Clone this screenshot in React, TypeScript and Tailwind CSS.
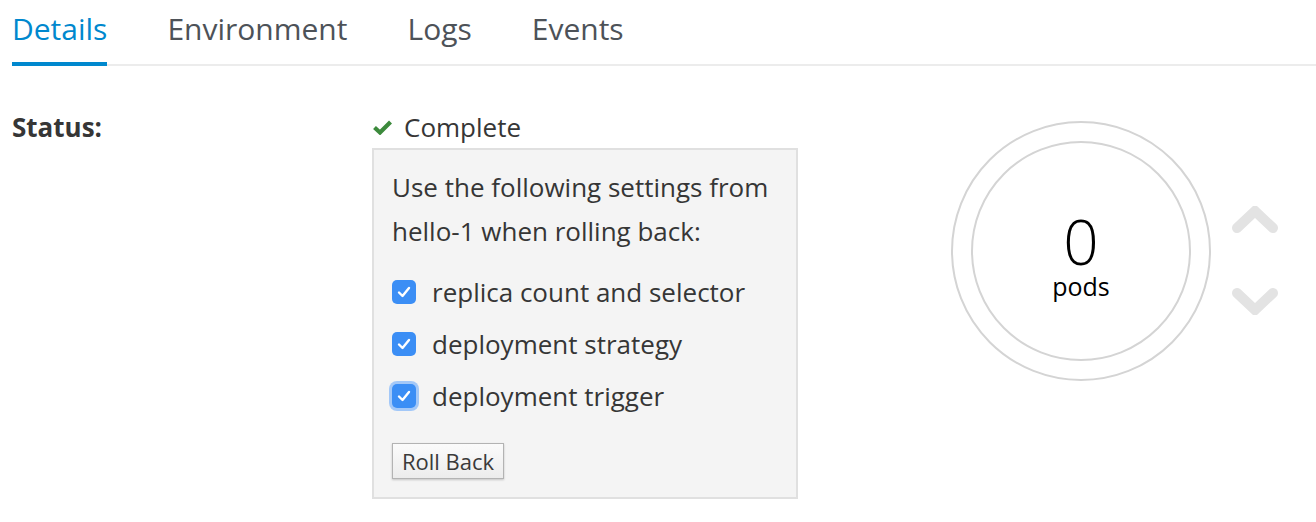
import React from "react";

const tabs = ["Details", "Environment", "Logs", "Events"];

const options = [
  "replica count and selector",
  "deployment strategy",
  "deployment trigger",
];

const Checkbox = ({ focused }: { focused?: boolean }) => (
  <span
    className={`flex h-[24px] w-[24px] items-center justify-center rounded-[5px] bg-[#3b8ef5] ${
      focused ? "ring-[3px] ring-[#a3c8f8]" : ""
    }`}
  >
    <svg width="14" height="12" viewBox="0 0 14 12">
      <path d="M2 6.5 L5.5 10 L12 2" fill="none" stroke="#fff" strokeWidth="2.4" strokeLinecap="round" strokeLinejoin="round" />
    </svg>
  </span>
);

const Chevron = ({ down }: { down?: boolean }) => (
  <svg width="46" height="28" viewBox="0 0 46 28" className={down ? "rotate-180" : ""}>
    <polyline points="5,22 23,5 41,22" fill="none" stroke="#e3e3e3" strokeWidth="10" strokeLinecap="round" strokeLinejoin="miter" />
  </svg>
);

export default function App() {
  return (
    <div className="min-h-[522px] bg-white font-['Open_Sans',sans-serif] text-[#363636]">
      {/* tabs */}
      <div className="ml-[12px] flex h-[66px] gap-[60px] border-b-2 border-[#ececec]">
        {tabs.map((t, i) => (
          <div
            key={t}
            className={`-mb-[2px] pt-[9px] text-[30px] leading-[40px] ${
              i === 0 ? "border-b-4 border-[#0088ce] text-[#0088ce]" : "text-[#4d5258]"
            }`}
          >
            {t}
          </div>
        ))}
      </div>

      {/* content */}
      <div className="flex px-[12px] pt-[43px]">
        <div className="w-[360px] text-[26px] font-bold leading-[36px]">Status:</div>

        <div className="w-[426px]">
          <div className="flex items-center gap-[12px] pl-[1px] text-[26px] leading-[36px]">
            <svg width="19" height="15" viewBox="0 0 19 15">
              <path d="M1.5 7.5 L7 12.5 L17.5 2" fill="none" stroke="#3c8a3c" strokeWidth="4.2" />
            </svg>
            Complete
          </div>
          <div className="mt-[3px] border-2 border-[#e0e0e0] bg-[#f4f4f4] px-[18px] pb-[18px] pt-[15px]">
            <p className="text-[26px] leading-[44px]">
              Use the following settings from
              <br />
              hello-1 when rolling back:
            </p>
            <div className="mt-[13px]">
              {options.map((o, i) => (
                <label key={o} className="flex h-[52px] items-center gap-[16px]">
                  <Checkbox focused={i === 2} />
                  <span className="text-[26px]">{o}</span>
                </label>
              ))}
            </div>
            <button className="mt-[21px] h-[36px] w-[112px] border border-[#b3b3b3] bg-gradient-to-b from-[#fbfbfb] to-[#ececec] text-[22px] leading-none text-[#3a3a3a] shadow-[0_1px_2px_rgba(0,0,0,0.2)]">
              Roll Back
            </button>
          </div>
        </div>

        <div className="ml-[153px] mt-[12px] flex h-[260px] w-[260px] items-center justify-center rounded-full border-2 border-[#d4d4d4]">
          <div className="flex h-[220px] w-[220px] flex-col items-center justify-center rounded-full border-2 border-[#d4d4d4] text-black">
            <span className="text-[62px] font-light leading-[70px]">0</span>
            <span className="text-[25px] leading-[20px]">pods</span>
          </div>
        </div>

        <div className="ml-[21px] mt-[97px] flex flex-col gap-[53px]">
          <Chevron />
          <Chevron down />
        </div>
      </div>
    </div>
  );
}
